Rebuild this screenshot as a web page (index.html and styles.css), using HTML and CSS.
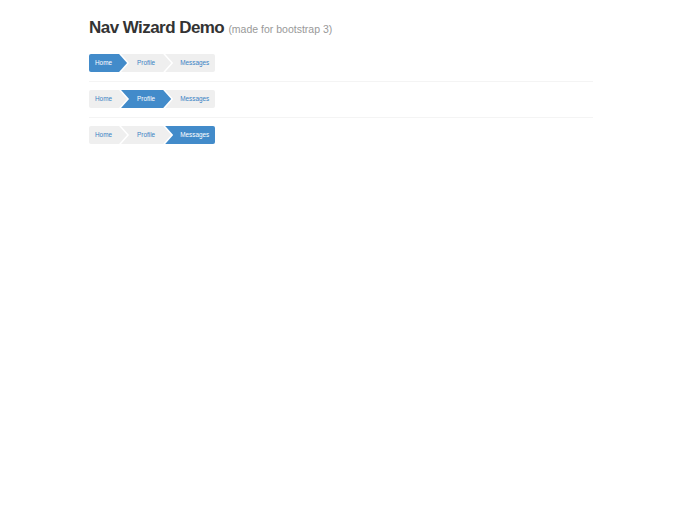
FILE: index.html
```html
<!DOCTYPE html>
<html>
<head>
<meta charset="utf-8">
<title>Nav Wizard Demo</title>
<link rel="stylesheet" href="styles.css">
</head>
<body>
<div class="container">
  <h1 class="title">Nav Wizard Demo <small>(made for bootstrap 3)</small></h1>

  <ul class="wizard">
    <li class="step first active"><a href="#">Home</a></li>
    <li class="step"><a href="#">Profile</a></li>
    <li class="step last"><a href="#">Messages</a></li>
  </ul>
  <hr class="divider">
  <ul class="wizard">
    <li class="step first"><a href="#">Home</a></li>
    <li class="step active"><a href="#">Profile</a></li>
    <li class="step last"><a href="#">Messages</a></li>
  </ul>
  <hr class="divider">
  <ul class="wizard">
    <li class="step first"><a href="#">Home</a></li>
    <li class="step"><a href="#">Profile</a></li>
    <li class="step last active"><a href="#">Messages</a></li>
  </ul>
</div>
</body>
</html>
```
FILE: styles.css
```css
html, body {
  margin: 0;
  padding: 0;
  background: #fff;
}

body {
  font-family: "Liberation Sans", Arial, Helvetica, sans-serif;
  color: #333;
}

.container {
  width: 504px;
  margin-left: 89px;
  padding-top: 17px;
}

.title {
  margin: 0 0 14px;
  font-size: 17px;
  line-height: 21px;
  font-weight: bold;
  letter-spacing: -0.55px;
  color: #333;
}

.title small {
  font-size: 10.5px;
  font-weight: normal;
  letter-spacing: 0;
  color: #999;
}

.wizard {
  display: flex;
  list-style: none;
  margin: 0;
  padding: 0;
}

/* chevron-shaped step; each step tucks under the previous arrow tip */
.step {
  height: 18px;
  background: #efefef;
  margin-left: -6px;
  clip-path: polygon(0 0, calc(100% - 8px) 0, 100% 50%, calc(100% - 8px) 100%, 0 100%, 8px 50%);
}

.step a {
  display: block;
  font-size: 6.4px;
  line-height: 18px;
  color: #3a82c4;
  text-decoration: none;
  padding: 0 16px 0 16px;
}

.step.first {
  margin-left: 0;
  border-radius: 2px 0 0 2px;
  clip-path: polygon(0 0, calc(100% - 8px) 0, 100% 50%, calc(100% - 8px) 100%, 0 100%);
}

.step.first a {
  padding: 0 15px 0 6px;
}

.step.last {
  border-radius: 0 2px 2px 0;
  clip-path: polygon(0 0, 100% 0, 100% 100%, 0 100%, 8px 50%);
}

.step.last a {
  padding: 0 6px 0 15px;
}

.step.active {
  background: #428bca;
}

.step.active a {
  color: #fff;
}

.divider {
  margin: 9px 0 8px;
  border: 0;
  border-top: 1px solid #f4f4f4;
  height: 0;
}
```
